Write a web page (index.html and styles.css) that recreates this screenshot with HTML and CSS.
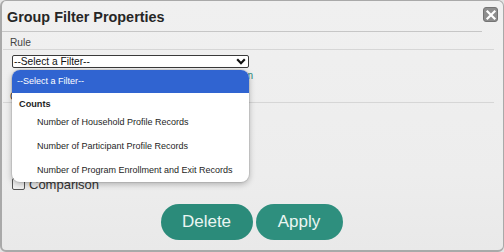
FILE: index.html
```html
<!DOCTYPE html>
<html>
<head>
<meta charset="utf-8">
<link rel="stylesheet" href="styles.css">
</head>
<body>
<div class="dialog">
  <div class="header"><h1 class="title">Group Filter Properties</h1></div>
  <button class="close" aria-label="Close">
    <svg width="12" height="12" viewBox="0 0 12 12"><path d="M2.5 2.5L9.5 9.5M9.5 2.5L2.5 9.5" stroke="#fff" stroke-width="2.2" stroke-linecap="square"/></svg>
  </button>
  <div class="section-label">Rule</div>
  <div class="select-wrap">
    <div class="select">
      <span class="select-text">--Select a Filter--</span>
      <svg class="chevron" width="10" height="7" viewBox="0 0 10 7"><path d="M1.2 1.3L5 5.2L8.8 1.3" fill="none" stroke="#111" stroke-width="2.2"/></svg>
    </div>
    <div class="dropdown">
      <div class="opt selected">--Select a Filter--</div>
      <div class="group">Counts</div>
      <div class="opt item">Number of Household Profile Records</div>
      <div class="opt item">Number of Participant Profile Records</div>
      <div class="opt item">Number of Program Enrollment and Exit Records</div>
    </div>
  </div>
  <div class="link-row"><a class="link">Click here to see the full description of this filter option</a></div>
  <div class="section-label heading">Conditions</div>
  <div class="checks">
    <label class="check"><span class="box"></span><span>Active</span></label>
    <label class="check"><span class="box"></span><span>Include</span></label>
    <label class="check"><span class="box"></span><span>Exclude</span></label>
    <label class="check comparison"><span class="box"></span><span>Comparison</span></label>
  </div>
  <div class="actions">
    <button class="btn btn-delete">Delete</button>
    <button class="btn btn-apply">Apply</button>
  </div>
</div>
</body>
</html>
```

FILE: styles.css
```css
* { box-sizing: border-box; }
html, body { margin: 0; padding: 0; }
body {
  width: 504px;
  height: 252px;
  overflow: hidden;
  font-family: "Liberation Sans", Arial, sans-serif;
  background: #e4e4e4;
}
.dialog {
  position: relative;
  width: 504px;
  height: 252px;
  border: 1px solid #a9a9a9;
  border-left-width: 2px;
  border-bottom-width: 2px;
  border-radius: 6px;
  background: linear-gradient(#f0f0f0, #ededed 70%, #e9e9e9);
}
.header {
  margin-right: 21px;
  padding: 8px 0 5px 5px;
  border-bottom: 1px solid #c6c6c6;
}
.title {
  margin: 0;
  font-size: 14.4px;
  line-height: 17px;
  font-weight: bold;
  color: #262626;
}
.close {
  position: absolute;
  top: 6px;
  right: 5px;
  width: 15px;
  height: 15px;
  padding: 0;
  border: 1px solid #747474;
  border-radius: 3px;
  background: #8e8e8e;
  display: flex;
  align-items: center;
  justify-content: center;
}
.section-label {
  margin: 5px 9px 0 1px;
  padding-left: 7px;
  font-size: 10.2px;
  line-height: 12px;
  color: #444;
  border-bottom: 1px solid #d6d6d6;
}
.select-wrap {
  position: relative;
  margin: 5px 0 0 10px;
  width: 237px;
}
.select {
  height: 13px;
  border: 1px solid #3a3a3a;
  border-radius: 2px;
  background: #fff;
  display: flex;
  align-items: center;
  justify-content: space-between;
  padding: 0 2px 0 1px;
}
.select-text {
  font-size: 10.2px;
  line-height: 11px;
  color: #111;
}
.chevron { display: block; }
.dropdown {
  position: absolute;
  top: calc(100% + 2px);
  left: 0;
  width: 237px;
  background: #fff;
  border-radius: 8px;
  overflow: hidden;
  box-shadow: 0 2px 6px rgba(0, 0, 0, 0.28), 0 0 0 1px rgba(0, 0, 0, 0.08);
  z-index: 5;
}
.opt {
  font-size: 9px;
  color: #1e1e1e;
  white-space: nowrap;
}
.selected {
  height: 23px;
  line-height: 23px;
  padding-left: 5px;
  background: #3064d1;
  color: #fff;
}
.group {
  height: 17px;
  padding: 6px 0 0 7px;
  font-size: 9.2px;
  line-height: 10px;
  font-weight: bold;
  color: #1e1e1e;
}
.item {
  height: 24px;
  line-height: 24px;
  padding-left: 25px;
}
.link-row {
  margin: 2px 0 0 12px;
  height: 12px;
  font-size: 10px;
  line-height: 11px;
  white-space: nowrap;
}
.link { color: #1f8a7a; }
.heading {
  margin-top: 7px;
  padding-top: 2px;
  line-height: 11px;
}
.checks {
  display: flex;
  flex-direction: column;
  gap: 9px;
  margin: 9px 0 0 10px;
}
.check {
  display: flex;
  align-items: center;
  gap: 4px;
  height: 13px;
  font-size: 13px;
  color: #333;
}
.comparison { height: 12px; }
.box {
  width: 13px;
  height: 12px;
  border: 1px solid #555;
  border-radius: 2px;
  background: #f2f2f2;
  flex: none;
}
.actions {
  display: flex;
  justify-content: center;
  gap: 3px;
  margin-top: 14px;
  padding-right: 2px;
}
.btn {
  height: 36px;
  border: none;
  border-radius: 18px;
  background: #2b8b7a;
  color: #eaf6f2;
  font-family: "Liberation Sans", Arial, sans-serif;
  font-size: 17px;
  padding: 0;
}
.btn-delete { width: 92px; }
.btn-apply { width: 87px; background: #2e8f7e; }
```
